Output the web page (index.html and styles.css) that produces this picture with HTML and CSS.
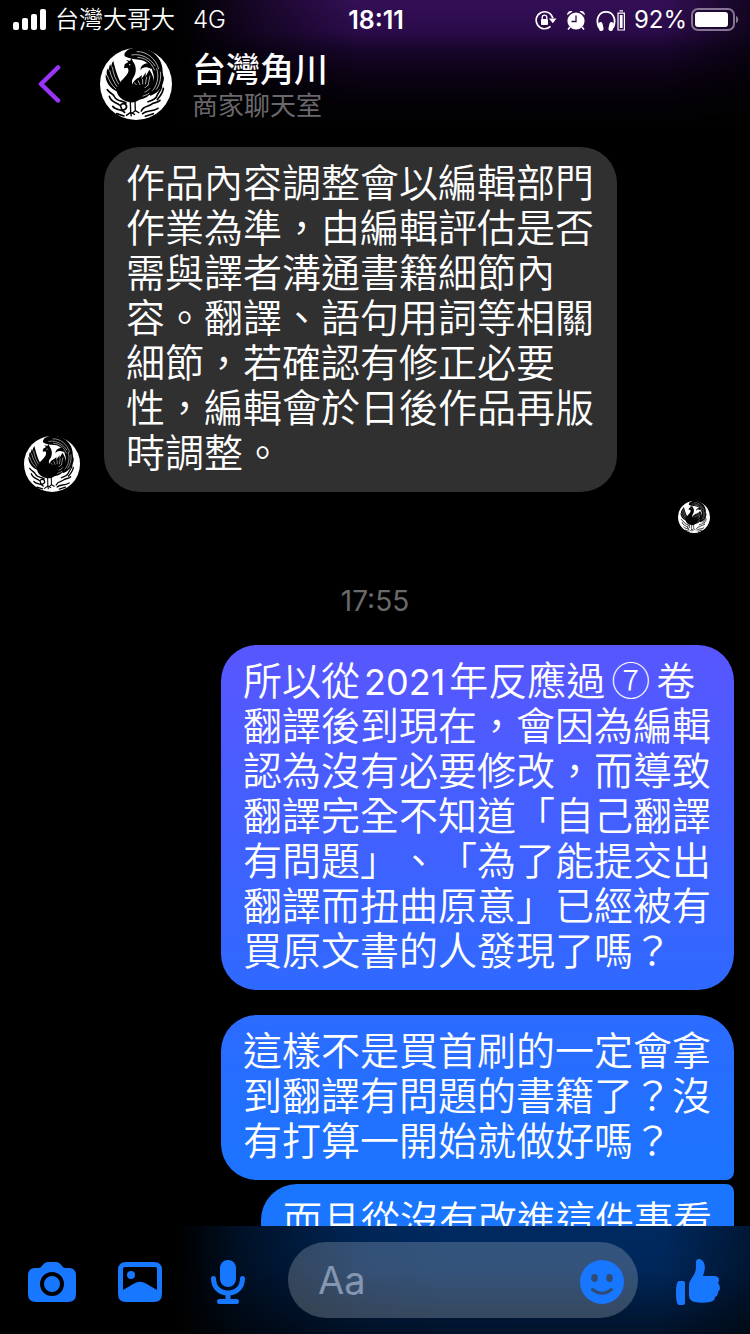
FILE: index.html
```
<!DOCTYPE html>
<html lang="zh-Hant">
<head>
    <meta charset="utf-8">
    <meta name="viewport" content="width=device-width, initial-scale=1">
    <title>台灣角川</title>
    <link rel="stylesheet" href="styles.css">
</head>
<body>
    <!-- Shared phoenix avatar -->
    <svg class="sprite" aria-hidden="true">
        <symbol id="phoenix" viewBox="14 9 216 216">
            <circle cx="122" cy="117" r="108" fill="#fff" />
            <!-- tail plumes -->
            <path d="M88 34C84 22 98 10 122 8C156 6 190 28 198 56C204 72 200 84 206 98C204 122 192 142 166 152L152 142C174 126 180 100 172 80C168 62 152 46 132 44C116 42 102 42 88 34Z" fill="#000" />
            <path d="M108 30C140 24 166 42 180 64M124 20C154 18 182 42 190 72M126 37C150 38 168 52 178 76M184 70C192 96 186 124 168 140M195 80C198 102 192 122 182 134" fill="none" stroke="#fff" stroke-width="2" />
            <path d="M164 54C144 54 134 64 136 76C140 66 154 64 168 72Z" fill="#000" />
            <!-- right wing -->
            <path d="M108 136C108 116 116 104 130 98L140 90L138 102L152 82L150 96L162 74C180 100 180 128 164 148C148 166 118 170 96 158Z" fill="#000" />
            <path d="M116 112L124 120M128 106L134 120M142 102L142 118M154 96L150 118M164 92L158 122M122 134C136 136 150 130 158 120M118 144C136 148 154 142 164 130M114 154C132 156 150 154 162 144" fill="none" stroke="#fff" stroke-width="2" />
            <!-- left wing -->
            <path d="M54 48C44 60 48 78 54 90L45 58C37 70 42 88 50 100L38 70C29 82 36 100 48 112L31 88C29 110 44 132 66 140L86 126C74 114 64 90 54 48Z" fill="#000" />
            <path d="M51 66C54 88 62 106 72 120M43 76C48 96 56 112 66 126M36 92C42 108 50 122 62 132" fill="none" stroke="#fff" stroke-width="2" />
            <!-- head, neck and body -->
            <path d="M86 70L88 58L99 51L92 44L104 48L108 40L114 52C124 64 124 84 114 98C108 106 108 118 118 128L150 128C150 148 136 166 116 172C92 174 68 160 64 138C64 118 82 104 92 92C100 82 102 74 96 68Z" fill="#000" />
            <circle cx="103" cy="59" r="2" fill="#fff" />
            <!-- legs -->
            <path d="M105 168L106 202L92 212M106 202L108 214M106 202L119 209M119 168L120 197L111 204M120 197L132 204" fill="none" stroke="#000" stroke-width="4" />
            <!-- clouds -->
            <path d="M36 134C44 146 54 146 58 156C64 170 82 166 92 174M42 154C48 174 64 172 72 180M78 188C70 178 86 172 92 180C98 190 86 198 78 192M52 184C60 196 78 192 88 202M64 206L86 213M196 116C206 128 188 142 184 154C180 164 168 166 158 170M204 130C204 144 190 158 186 164M138 198C144 182 158 186 168 178C178 170 184 176 194 166M142 206C154 194 170 202 188 190M150 214L174 206" fill="none" stroke="#000" stroke-width="5" stroke-linecap="round" />
        </symbol>
    </svg>

    <div class="app">
        <header class="header">
            <div class="status-bar">
                <div class="status-left">
                    <svg class="signal" viewBox="0 0 34 22" aria-hidden="true">
                        <rect x="0" y="13" width="6" height="8" rx="2" />
                        <rect x="9" y="9" width="6" height="12" rx="2" />
                        <rect x="18" y="5" width="6" height="16" rx="2" />
                        <rect x="27" y="0" width="6" height="21" rx="2" />
                    </svg>
                    <span>台灣大哥大</span>
                    <span class="network">4G</span>
                </div>
                <time class="clock">18:11</time>
                <div class="status-right">
                    <svg class="icon-lock" viewBox="0 0 22 20" aria-hidden="true">
                        <path d="M15.5 16.4A8.5 8.5 0 1 1 17.9 8.2" fill="none" stroke="#fff" stroke-width="1.6" />
                        <path d="M14 8.5H21.5L17.8 13.2Z" />
                        <rect x="6" y="9" width="7" height="6" rx="1" />
                        <path d="M7.2 9V7.5A2.2 2.2 0 0 1 11.8 7.5V9" fill="none" stroke="#fff" stroke-width="1.3" />
                    </svg>
                    <svg class="icon-alarm" viewBox="0 0 20 20" aria-hidden="true">
                        <circle cx="10" cy="11" r="8.6" />
                        <path d="M1.2 5.2C.8 2 3.6.1 6.6 1.4ZM18.8 5.2C19.2 2 16.4.1 13.4 1.4Z" />
                        <path d="M4 17L2 19.4M16 17L18 19.4" stroke="#fff" stroke-width="1.6" />
                        <path d="M10 5.5V11.5H5.5" fill="none" stroke="#2b0c4a" stroke-width="1.3" />
                    </svg>
                    <svg class="icon-headset" viewBox="0 0 30 21" aria-hidden="true">
                        <path d="M3 18C-1 9 3 1.9 10 1.9S21 9 17 18" fill="none" stroke="#fff" stroke-width="1.8" />
                        <rect x="2.4" y="12" width="4.6" height="9" rx="2.3" transform="rotate(-12 5 16)" />
                        <rect x="13" y="12" width="4.6" height="9" rx="2.3" transform="rotate(12 15 16)" />
                        <path d="M22 3.2H28.4V20H22ZM23.5 .8H27" fill="none" stroke="#fff" stroke-width="1.2" />
                        <rect x="23.8" y="5" width="2.8" height="13" />
                    </svg>
                    <span class="percent">92%</span>
                    <svg class="battery" viewBox="0 0 48 24" aria-hidden="true">
                        <rect x="1" y="1" width="42" height="21" rx="6" fill="none" stroke="#857592" stroke-width="2" />
                        <rect x="4" y="4" width="33" height="15" rx="3" />
                        <path d="M45 8C48 9 48 14 45 15Z" fill="#857592" />
                    </svg>
                </div>
            </div>
            <div class="chat-header">
                <button class="back" aria-label="返回">
                    <svg viewBox="0 0 24 38" aria-hidden="true">
                        <path d="M20 2.5L3 19L20 35.5" fill="none" stroke="#9a34fb" stroke-width="4.5" stroke-linecap="round" stroke-linejoin="round" />
                    </svg>
                </button>
                <svg class="avatar avatar-large" aria-hidden="true"><use href="#phoenix" /></svg>
                <div class="title">
                    <h1 class="name">台灣角川</h1>
                    <p class="subtitle">商家聊天室</p>
                </div>
            </div>
        </header>

        <main class="messages">
            <div class="row-received">
                <svg class="avatar avatar-medium" aria-hidden="true"><use href="#phoenix" /></svg>
                <p class="bubble received">作品內容調整會以編輯部門作業為準，由編輯評估是否需與譯者溝通書籍細節內容。翻譯、語句用詞等相關細節，若確認有修正必要性，編輯會於日後作品再版時調整。</p>
            </div>
            <svg class="avatar avatar-seen" aria-hidden="true"><use href="#phoenix" /></svg>
            <time class="timestamp">17:55</time>
            <p class="bubble sent sent-single">所以從<span class="digits">2021</span>年反應過<span class="circled">⑦</span>卷翻譯後到現在，會因為編輯認為沒有必要修改，而導致翻譯完全不知道「自己翻譯有問題」、「為了能提交出翻譯而扭曲原意」已經被有買原文書的人發現了嗎？</p>
            <p class="bubble sent sent-first">這樣不是買首刷的一定會拿到翻譯有問題的書籍了？沒有打算一開始就做好嗎？</p>
            <p class="bubble sent sent-next">而且從沒有改進這件事看</p>
        </main>

        <footer class="composer">
            <button class="tool" aria-label="相機">
                <svg class="icon-camera" viewBox="0 0 48 40" aria-hidden="true">
                    <path d="M7 6H11C14 6 15 0 20 0H28C33 0 34 6 37 6H41Q48 6 48 14V32Q48 40 40 40H8Q0 40 0 32V14Q0 6 7 6Z" />
                    <circle cx="24" cy="22" r="10" fill="#1877ff" stroke="#000" stroke-width="4" />
                </svg>
            </button>
            <button class="tool" aria-label="相片">
                <svg class="icon-photo" viewBox="0 0 44 40" aria-hidden="true">
                    <path fill-rule="evenodd" d="M8 0H36Q44 0 44 8V32Q44 40 36 40H8Q0 40 0 32V8Q0 0 8 0ZM7 5Q5 5 5 7V28L16 21.5Q22 18 28 21.5L39 28V7Q39 5 37 5Z" />
                    <circle cx="13" cy="13" r="4" />
                </svg>
            </button>
            <button class="tool" aria-label="語音">
                <svg class="icon-mic" viewBox="0 0 34 44" aria-hidden="true">
                    <rect x="9" y="0" width="16" height="27" rx="8" />
                    <path d="M2.5 18.5C2.5 38 31.5 38 31.5 18.5M17 33V41M8.5 41.5H25.5" fill="none" stroke="#1877ff" stroke-width="5" stroke-linecap="round" />
                </svg>
            </button>
            <div class="input-box">
                <input type="text" class="message-input" placeholder="Aa" aria-label="訊息">
                <button class="tool" aria-label="表情符號">
                    <svg class="icon-smile" viewBox="0 0 44 44" aria-hidden="true">
                        <circle cx="22" cy="22" r="22" />
                        <ellipse cx="14.5" cy="18" rx="3.3" ry="4" fill="#304c74" />
                        <ellipse cx="29.5" cy="18" rx="3.3" ry="4" fill="#304c74" />
                        <path d="M12.5 29.5Q22 37 31.5 29.5" fill="none" stroke="#304c74" stroke-width="3" stroke-linecap="round" />
                    </svg>
                </button>
            </div>
            <button class="tool like" aria-label="讚">
                <svg class="icon-like" viewBox="0 0 44 46" aria-hidden="true">
                    <path d="M3 22H7Q9 22 9 24V44Q9 46 7 46H3Q0 46 0 34Q0 22 3 22Z" />
                    <path d="M13 26C13 20 20 17 20 8V3C20 -1 26 -1 28 4C30 9 28 13 27 17H38Q43 17 43 21Q43 23 42 24Q44 26 44 29Q44 31 42 33Q42 37 39 38Q39 42 34 43C28 44 20 44 16 42Q13 40 13 37Z" />
                </svg>
            </button>
        </footer>
    </div>
</body>
</html>
```
FILE: styles.css
```
* {
    box-sizing: border-box;
}
body {
    margin: 0;
    background: #000;
    color: #fff;
    font-family: Inter, "Noto Sans CJK TC", sans-serif;
    text-spacing-trim: space-all;
}
p,
h1 {
    margin: 0;
}
button {
    display: flex;
    padding: 0;
    border: 0;
    background: none;
    cursor: pointer;
}
svg {
    display: block;
    flex: none;
    fill: #fff;
}
.sprite {
    position: absolute;
    width: 0;
    height: 0;
}
.app {
    display: flex;
    flex-direction: column;
    height: 100vh;
}

/* Header */
.header {
    flex: none;
    height: 128px;
    background:
        linear-gradient(to right, #000 24%, rgba(0, 0, 0, 0.5) 35%, transparent 48%, transparent 88%, rgba(0, 0, 0, 0.6)),
        linear-gradient(#340f57, #2b0b4a 24%, #16052a 40%, #0b0213 60%, #030106 80%, #000);
}
.status-bar {
    display: grid;
    grid-template-columns: 1fr auto 1fr;
    align-items: center;
    height: 40px;
    padding: 0 11px 0 13px;
    font-size: 24px;
    line-height: 40px;
}
.status-left,
.status-right {
    display: flex;
    align-items: center;
}
.status-left {
    font-weight: 350;
}
.status-right {
    justify-content: flex-end;
}
.signal {
    width: 34px;
    height: 22px;
    margin-right: 8px;
}
.network {
    margin-left: 18px;
}
.clock {
    font-size: 25px;
    font-weight: 600;
}
.icon-lock {
    width: 22px;
    height: 20px;
    margin-right: 9px;
}
.icon-alarm {
    width: 20px;
    height: 20px;
    margin-right: 10px;
}
.icon-headset {
    width: 30px;
    height: 21px;
    margin-right: 8px;
}
.percent {
    margin-right: 4px;
}
.battery {
    width: 48px;
    height: 24px;
}
.chat-header {
    display: flex;
    align-items: center;
    height: 88px;
    padding-left: 38px;
}
.back {
    margin-right: 38px;
}
.back svg {
    width: 24px;
    height: 38px;
}
.avatar-large {
    width: 72px;
    height: 72px;
    margin-right: 20px;
}
.title {
    padding-top: 6px;
}
.name {
    font-size: 34px;
    font-weight: 500;
    line-height: 38px;
}
.subtitle {
    color: #6a686c;
    font-size: 26px;
    line-height: 34px;
}

/* Messages */
.messages {
    display: flex;
    flex: 1;
    flex-direction: column;
    min-height: 0;
    padding: 19px 16px 0;
    overflow: hidden;
}
.messages > * {
    flex: none;
}
.row-received {
    display: flex;
    align-items: flex-end;
    gap: 24px;
    padding-left: 8px;
}
.avatar-medium {
    width: 56px;
    height: 56px;
}
.bubble {
    max-width: 513px;
    padding: 11px 22px 19px;
    border-radius: 36px;
    font-family: "Noto Sans CJK TC", sans-serif;
    font-size: 39px;
    font-weight: 350;
    line-height: 45px;
}
.received {
    background: #303030;
}
.avatar-seen {
    align-self: flex-end;
    width: 32px;
    height: 32px;
    margin: 9px 24px 0 0;
}
.timestamp {
    align-self: center;
    margin: 48px 0 24px;
    color: #6a6a6a;
    font-size: 28px;
    line-height: 40px;
}
.sent {
    align-self: flex-end;
}
.digits {
    margin: 0 4px;
    font-family: Inter, sans-serif;
    font-size: 36px;
    font-weight: 400;
    line-height: 1;
}
.circled {
    margin: 0 6px;
    font-weight: 300;
}
.sent-single {
    margin-bottom: 25px;
    background: linear-gradient(#5856ff, #2f69ff);
}
.sent-first {
    margin-bottom: 4px;
    border-bottom-right-radius: 8px;
    background: linear-gradient(#2c6bff, #1b74ff);
}
.sent-next {
    border-radius: 36px 8px 8px 36px;
    background: #1a75ff;
}

/* Composer */
.composer {
    display: flex;
    flex: none;
    align-items: center;
    height: 108px;
    padding: 0 28px;
    background:
        linear-gradient(to right, #000 24%, rgba(0, 0, 0, 0.6) 32%, rgba(0, 0, 0, 0.1) 48%, transparent 60%, transparent 88%, rgba(0, 0, 0, 0.45)),
        linear-gradient(#002a60, #00275a 40%, #001228);
}
.tool {
    padding-top: 4px;
}
.tool svg {
    fill: #1877ff;
}
.icon-camera {
    width: 48px;
    height: 40px;
    margin-right: 42px;
}
.icon-photo {
    width: 44px;
    height: 40px;
    margin-right: 49px;
}
.icon-mic {
    width: 34px;
    height: 44px;
    margin-right: 43px;
}
.input-box {
    display: flex;
    flex: 1;
    align-items: center;
    min-width: 0;
    height: 76px;
    padding: 0 14px 0 30px;
    border-radius: 38px;
    background: linear-gradient(rgba(255, 255, 255, 0.2), rgba(255, 255, 255, 0.21));
}
.message-input {
    flex: 1;
    min-width: 0;
    padding: 0;
    border: 0;
    outline: 0;
    background: none;
    color: #fff;
    font-family: inherit;
    font-size: 38px;
    line-height: 48px;
}
.message-input::placeholder {
    color: #8496b0;
}
.icon-smile {
    width: 44px;
    height: 44px;
}
.like {
    margin: 0 2px 0 38px;
}
.icon-like {
    width: 44px;
    height: 46px;
}
```
